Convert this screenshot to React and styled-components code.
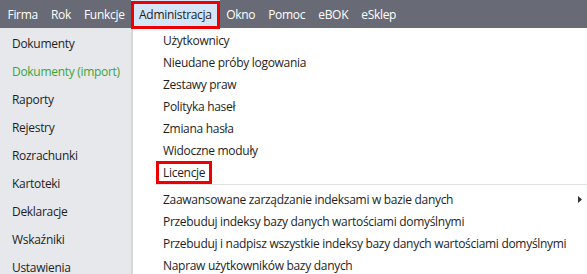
import React from "react";
import styled, { createGlobalStyle } from "styled-components";

const Global = createGlobalStyle`
  html, body { margin: 0; padding: 0; background: #ffffff; overflow: hidden; }
  body { font-family: "Open Sans", "Noto Sans", sans-serif; font-size: 12px; }
`;

const Window = styled.div`
  width: 587px;
  height: 274px;
  display: flex;
  flex-direction: column;
  overflow: hidden;
`;

const MenuBar = styled.div`
  height: 28px;
  flex: none;
  background: #686b75;
  display: flex;
  align-items: stretch;
  padding-left: 1px;
`;

const MenuItem = styled.div`
  display: flex;
  align-items: center;
  padding: 0 ${(p) => (p.$active ? 8 : 6.5)}px;
  color: ${(p) => (p.$active ? "#1e1e1e" : "#ffffff")};
  background: ${(p) => (p.$active ? "#d4e5f7" : "transparent")};
  position: relative;
  font-size: 12px;
  letter-spacing: -0.3px;
`;

const Highlight = styled.span`
  position: absolute;
  left: 0;
  right: 0;
  top: 1px;
  bottom: -1px;
  border: 3px solid #ee0000;
  pointer-events: none;
`;

const Body = styled.div`
  flex: 1;
  display: flex;
  min-height: 0;
`;

const Sidebar = styled.div`
  width: 131px;
  flex: none;
  background: #e7e8eb;
  border-right: 2px solid #d6d7da;
  display: flex;
  flex-direction: column;
  padding-top: 1px;
  overflow: hidden;
`;

const SideItem = styled.div`
  height: 28px;
  flex: none;
  display: flex;
  align-items: center;
  padding-left: 12px;
  color: ${(p) => (p.$accent ? "#3aa537" : "#1e1e1e")};
  font-size: 12px;
  letter-spacing: -0.3px;
`;

const Dropdown = styled.div`
  flex: 1;
  background: #ffffff;
  display: flex;
  flex-direction: column;
  padding-top: 1px;
  overflow: hidden;
`;

const DropItem = styled.div`
  height: 22px;
  flex: none;
  display: flex;
  align-items: center;
  padding-left: 30px;
  padding-right: 5px;
  color: #1e1e1e;
  font-size: 12px;
  letter-spacing: -0.3px;
`;

const Label = styled.span`
  flex: 1;
`;

const Boxed = styled.span`
  position: relative;
  align-self: stretch;
  display: flex;
  align-items: center;
`;

const BoxFrame = styled.span`
  position: absolute;
  left: -7px;
  right: -7px;
  top: 0;
  bottom: -1px;
  border: 3px solid #ee0000;
  pointer-events: none;
`;

const Separator = styled.div`
  height: 1px;
  flex: none;
  background: #e2e2e2;
  margin: 1px 0 3px 22px;
`;

const Arrow = styled.svg`
  width: 4px;
  height: 7px;
  flex: none;
`;

const menus = ["Firma", "Rok", "Funkcje", "Administracja", "Okno", "Pomoc", "eBOK", "eSklep"];
const side = [
  "Dokumenty",
  "Dokumenty (import)",
  "Raporty",
  "Rejestry",
  "Rozrachunki",
  "Kartoteki",
  "Deklaracje",
  "Wskaźniki",
  "Ustawienia",
];
const top = [
  "Użytkownicy",
  "Nieudane próby logowania",
  "Zestawy praw",
  "Polityka haseł",
  "Zmiana hasła",
  "Widoczne moduły",
];
const bottom = [
  "Przebuduj indeksy bazy danych wartościami domyślnymi",
  "Przebuduj i nadpisz wszystkie indeksy bazy danych wartościami domyślnymi",
  "Napraw użytkowników bazy danych",
];

export default function App() {
  return (
    <Window>
      <Global />
      <MenuBar>
        {menus.map((m) => (
          <MenuItem key={m} $active={m === "Administracja"}>
            {m}
            {m === "Administracja" && <Highlight />}
          </MenuItem>
        ))}
      </MenuBar>
      <Body>
        <Sidebar>
          {side.map((s) => (
            <SideItem key={s} $accent={s === "Dokumenty (import)"}>
              {s}
            </SideItem>
          ))}
        </Sidebar>
        <Dropdown>
          {top.map((t) => (
            <DropItem key={t}>
              <Label>{t}</Label>
            </DropItem>
          ))}
          <DropItem>
            <Boxed>
              Licencje
              <BoxFrame />
            </Boxed>
          </DropItem>
          <Separator />
          <DropItem>
            <Label>Zaawansowane zarządzanie indeksami w bazie danych</Label>
            <Arrow viewBox="0 0 4 7">
              <path d="M0 0 L4 3.5 L0 7 Z" fill="#333" />
            </Arrow>
          </DropItem>
          {bottom.map((t) => (
            <DropItem key={t}>
              <Label>{t}</Label>
            </DropItem>
          ))}
        </Dropdown>
      </Body>
    </Window>
  );
}
